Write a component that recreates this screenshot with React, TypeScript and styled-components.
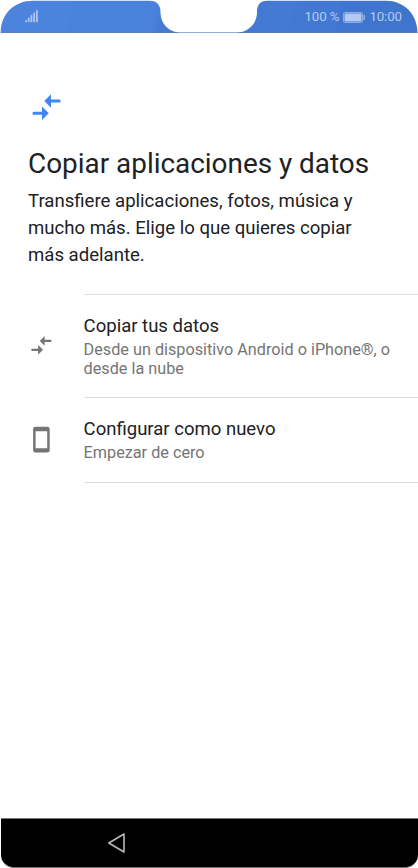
import React from 'react';
import styled, { createGlobalStyle } from 'styled-components';

const GlobalStyle = createGlobalStyle`
  * { box-sizing: border-box; }
  body { margin: 0; background: #fff; font-family: Roboto, "Noto Sans", sans-serif; }
`;

const Screen = styled.div`
  width: 418px;
  height: 868px;
  display: flex;
  flex-direction: column;
  background: #fff;
  overflow: hidden;
`;

const StatusBar = styled.header`
  flex: none;
  height: 33px;
  display: flex;
  align-items: center;
  padding: 1px 16px 0 25px;
  color: #b4caef;
  background:
    linear-gradient(to top, rgba(110, 125, 155, 0.5) 1px, transparent 1px),
    linear-gradient(105deg, #4b83dd 0 17%, #4a81db 18% 37%, #447ad4 39% 69%, #4278d2 70% 80%, #4075ce 81%);
  clip-path: path("M0.7 33C0.7 14 14 0.7 33 0.7H150C157 0.7 160.5 5 160.5 12C160.5 24 169 32.5 181 32.5H236C248 32.5 257 24 257 12C257 5 260 0.7 267 0.7H386C404 0.7 417.5 14 417.5 33Z");
`;

const StatusInfo = styled.div`
  margin-left: auto;
  display: flex;
  align-items: center;
  font-size: 13.3px;
  letter-spacing: -0.1px;
  line-height: 16px;
  white-space: pre;
`;

const BatteryIcon = styled.svg`
  margin: 0 4px;
`;

const Content = styled.main`
  flex: 1;
  padding-top: 57px;
`;

const Intro = styled.section`
  padding: 0 28px;
  color: #202124;
`;

const HeaderIcon = styled.div`
  height: 34px;
  display: flex;
`;

const Title = styled.h1`
  margin: 22px 0 0;
  font-size: 27.9px;
  font-weight: 400;
  line-height: 36px;
  white-space: nowrap;
`;

const Description = styled.p`
  margin: 6px 0 0;
  font-size: 18.58px;
  line-height: 27px;
  white-space: nowrap;
`;

const Options = styled.div`
  margin-top: 25px;
`;

const Option = styled.div<{ $height: number }>`
  display: grid;
  grid-template-columns: 83.6px 1fr;
  height: ${(p) => p.$height}px;
`;

const OptionIcon = styled.div`
  display: flex;
  align-items: center;
  padding-left: 28.4px;
`;

const OptionBody = styled.div<{ $last?: boolean }>`
  padding-top: 19px;
  border-top: 1px solid #dedede;
  border-bottom: ${(p) => (p.$last ? '1px solid #dedede' : '0')};
`;

const OptionTitle = styled.div`
  color: #202124;
  font-size: 18.55px;
  line-height: 24px;
`;

const OptionText = styled.div`
  margin-top: 2px;
  color: #757575;
  font-size: 16.23px;
  line-height: 19px;
  white-space: nowrap;
`;

const NavBar = styled.nav`
  flex: none;
  height: 50px;
  margin: 0 0.5px;
  padding-left: 105px;
  display: flex;
  align-items: center;
  background: #000;
  border: solid #777;
  border-width: 1px 0;
  border-radius: 0 0 13px 13px;
`;

const TransferIcon = ({ width, color }: { width: number; color: string }) => (
  <svg width={width} height={(width * 34) / 36} viewBox="0 0 36 34" fill={color}>
    <path d="M16.3 11 23 4.3V9.5H31.2a1.5 1.5 0 0 1 0 3H23v5.2z" />
    <path d="M20.8 23.3 14 16.6V21.8H5.9a1.5 1.5 0 0 0 0 3H14V30z" />
  </svg>
);

const signalBars = [2, 4.5, 7, 9.5, 12];

export default function App() {
  return (
    <>
      <GlobalStyle />
      <Screen>
        <StatusBar>
          <svg width="14" height="14" viewBox="0 0 14 14" fill="#adc6f1">
            {signalBars.map((h, i) => (
              <rect key={h} x={i * 2.75} y={12.2 - h} width="1.8" height={h} />
            ))}
          </svg>
          <StatusInfo>
            100 %
            <BatteryIcon width="22" height="11" viewBox="0 0 22 11">
              <rect x="0.5" y="0.5" width="19" height="10" rx="1.2" fill="none" stroke="#8fb0e6" />
              <rect x="1.5" y="1.5" width="17" height="8" fill="#b4caf0" />
              <rect x="20.5" y="3" width="1.3" height="5" fill="#a5bfea" />
            </BatteryIcon>
            10:00
          </StatusInfo>
        </StatusBar>
        <Content>
          <Intro>
            <HeaderIcon>
              <TransferIcon width={36} color="#4285f4" />
            </HeaderIcon>
            <Title>Copiar aplicaciones y datos</Title>
            <Description>
              Transfiere aplicaciones, fotos, música y<br />
              mucho más. Elige lo que quieres copiar<br />
              más adelante.
            </Description>
          </Intro>
          <Options>
            <Option $height={103}>
              <OptionIcon>
                <TransferIcon width={26} color="#757575" />
              </OptionIcon>
              <OptionBody>
                <OptionTitle>Copiar tus datos</OptionTitle>
                <OptionText>Desde un dispositivo Android o iPhone®, o<br />desde la nube</OptionText>
              </OptionBody>
            </Option>
            <Option $height={86}>
              <OptionIcon>
                <svg width="28" height="28" viewBox="0 0 28 28" fill="#757575">
                  <path fillRule="evenodd" d="M7.5 0.8h11.8a2.4 2.4 0 0 1 2.4 2.4v21a2.4 2.4 0 0 1-2.4 2.4H7.5a2.4 2.4 0 0 1-2.4-2.4V3.2A2.4 2.4 0 0 1 7.5 0.8zM7.6 5.3v17h11.6v-17z" />
                </svg>
              </OptionIcon>
              <OptionBody $last>
                <OptionTitle>Configurar como nuevo</OptionTitle>
                <OptionText>Empezar de cero</OptionText>
              </OptionBody>
            </Option>
          </Options>
        </Content>
        <NavBar>
          <svg width="20" height="22" viewBox="0 0 20 22" fill="none" stroke="#b8b8b8" strokeWidth="1.6" strokeLinejoin="round">
            <path d="M2.8 11 18 2v18z" />
          </svg>
        </NavBar>
      </Screen>
    </>
  );
}
